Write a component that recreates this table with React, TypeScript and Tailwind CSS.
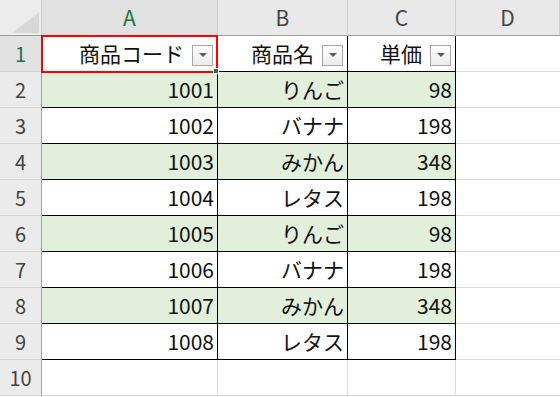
import React from 'react';

const rows = [
  { code: '1001', name: 'りんご', price: '98' },
  { code: '1002', name: 'バナナ', price: '198' },
  { code: '1003', name: 'みかん', price: '348' },
  { code: '1004', name: 'レタス', price: '198' },
  { code: '1005', name: 'りんご', price: '98' },
  { code: '1006', name: 'バナナ', price: '198' },
  { code: '1007', name: 'みかん', price: '348' },
  { code: '1008', name: 'レタス', price: '198' },
];

const font = { fontFamily: '"Noto Sans CJK JP", "Noto Sans", sans-serif' };

const FilterButton: React.FC = () => (
  <div className="ml-[8px] mt-[3px] flex h-[21px] w-[21px] shrink-0 items-center justify-center border border-[#a6a6a6] bg-gradient-to-b from-white to-[#ececec]">
    <div className="h-0 w-0 border-x-[4px] border-t-[4px] border-x-transparent border-t-[#595959]" />
  </div>
);

const RowHeader: React.FC<{ n: number; active?: boolean }> = ({ n, active }) => (
  <div
    className={`flex h-[36px] items-center justify-center border-b border-r border-b-[#d4d4d4] border-r-[#9e9e9e] text-[20px] ${
      active ? 'bg-[#e1e1e1] text-[#217346]' : 'bg-[#ebebeb] text-[#444]'
    }`}
  >
    {n}
  </div>
);

export default function App() {
  return (
    <div className="relative h-[397px] w-[560px] overflow-hidden bg-white text-[#111]" style={font}>
      <div className="grid grid-cols-[42px_176px_130px_108px_104px]">
        {/* column headers */}
        <div className="relative h-[36px] border-b border-r border-b-[#9e9e9e] border-r-[#d0d0d0] bg-[#ececec]">
          <div
            className="absolute left-[12px] top-[12px] h-[21px] w-[27px] bg-[#d8d8d8]"
            style={{ clipPath: 'polygon(100% 0, 100% 100%, 0 100%)' }}
          />
        </div>
        <div className="flex h-[36px] items-center justify-center border-b border-r border-b-[#9e9e9e] border-r-[#d0d0d0] bg-[#e1e1e1] text-[21px] text-[#217346]">
          A
        </div>
        {['B', 'C', 'D'].map((c) => (
          <div
            key={c}
            className="flex h-[36px] items-center justify-center border-b border-r border-b-[#9e9e9e] border-r-[#d0d0d0] bg-[#e9e9e9] text-[21px] text-[#444]"
          >
            {c}
          </div>
        ))}

        {/* row 1: table header */}
        <RowHeader n={1} active />
        {['商品コード', '商品名', '単価'].map((h) => (
          <div
            key={h}
            className="flex h-[36px] items-center justify-end border-b border-r border-black pr-[4px] text-[21px]"
          >
            <span className="leading-none">{h}</span>
            <FilterButton />
          </div>
        ))}
        <div className="h-[36px] border-b border-[#d9d9d9]" />

        {/* data rows */}
        {rows.map((r, i) => {
          const fill = i % 2 === 0 ? 'bg-[#e2efda]' : 'bg-white';
          return (
            <React.Fragment key={r.code}>
              <RowHeader n={i + 2} />
              <div className={`flex h-[36px] items-center justify-end border-b border-r border-black pr-[3px] text-[21px] ${fill}`}>
                {r.code}
              </div>
              <div className={`flex h-[36px] items-center justify-end border-b border-r border-black pr-[3px] text-[21px] ${fill}`}>
                {r.name}
              </div>
              <div className={`flex h-[36px] items-center justify-end border-b border-r border-black pr-[3px] text-[21px] ${fill}`}>
                {r.price}
              </div>
              <div className="h-[36px] border-b border-[#d9d9d9]" />
            </React.Fragment>
          );
        })}

        {/* row 10 */}
        <RowHeader n={10} />
        <div className="h-[36px] border-b border-r border-[#d9d9d9]" />
        <div className="h-[36px] border-b border-r border-[#d9d9d9]" />
        <div className="h-[36px] border-b border-r border-[#d9d9d9]" />
        <div className="h-[36px] border-b border-[#d9d9d9]" />
      </div>

      {/* active cell selection */}
      <div className="pointer-events-none absolute left-[41px] top-[35px] h-[38px] w-[177px] border-2 border-[#ff0000]" />
      <div className="pointer-events-none absolute left-[213px] top-[68px] h-[6px] w-[6px] border border-white bg-[#217346]" />
    </div>
  );
}
